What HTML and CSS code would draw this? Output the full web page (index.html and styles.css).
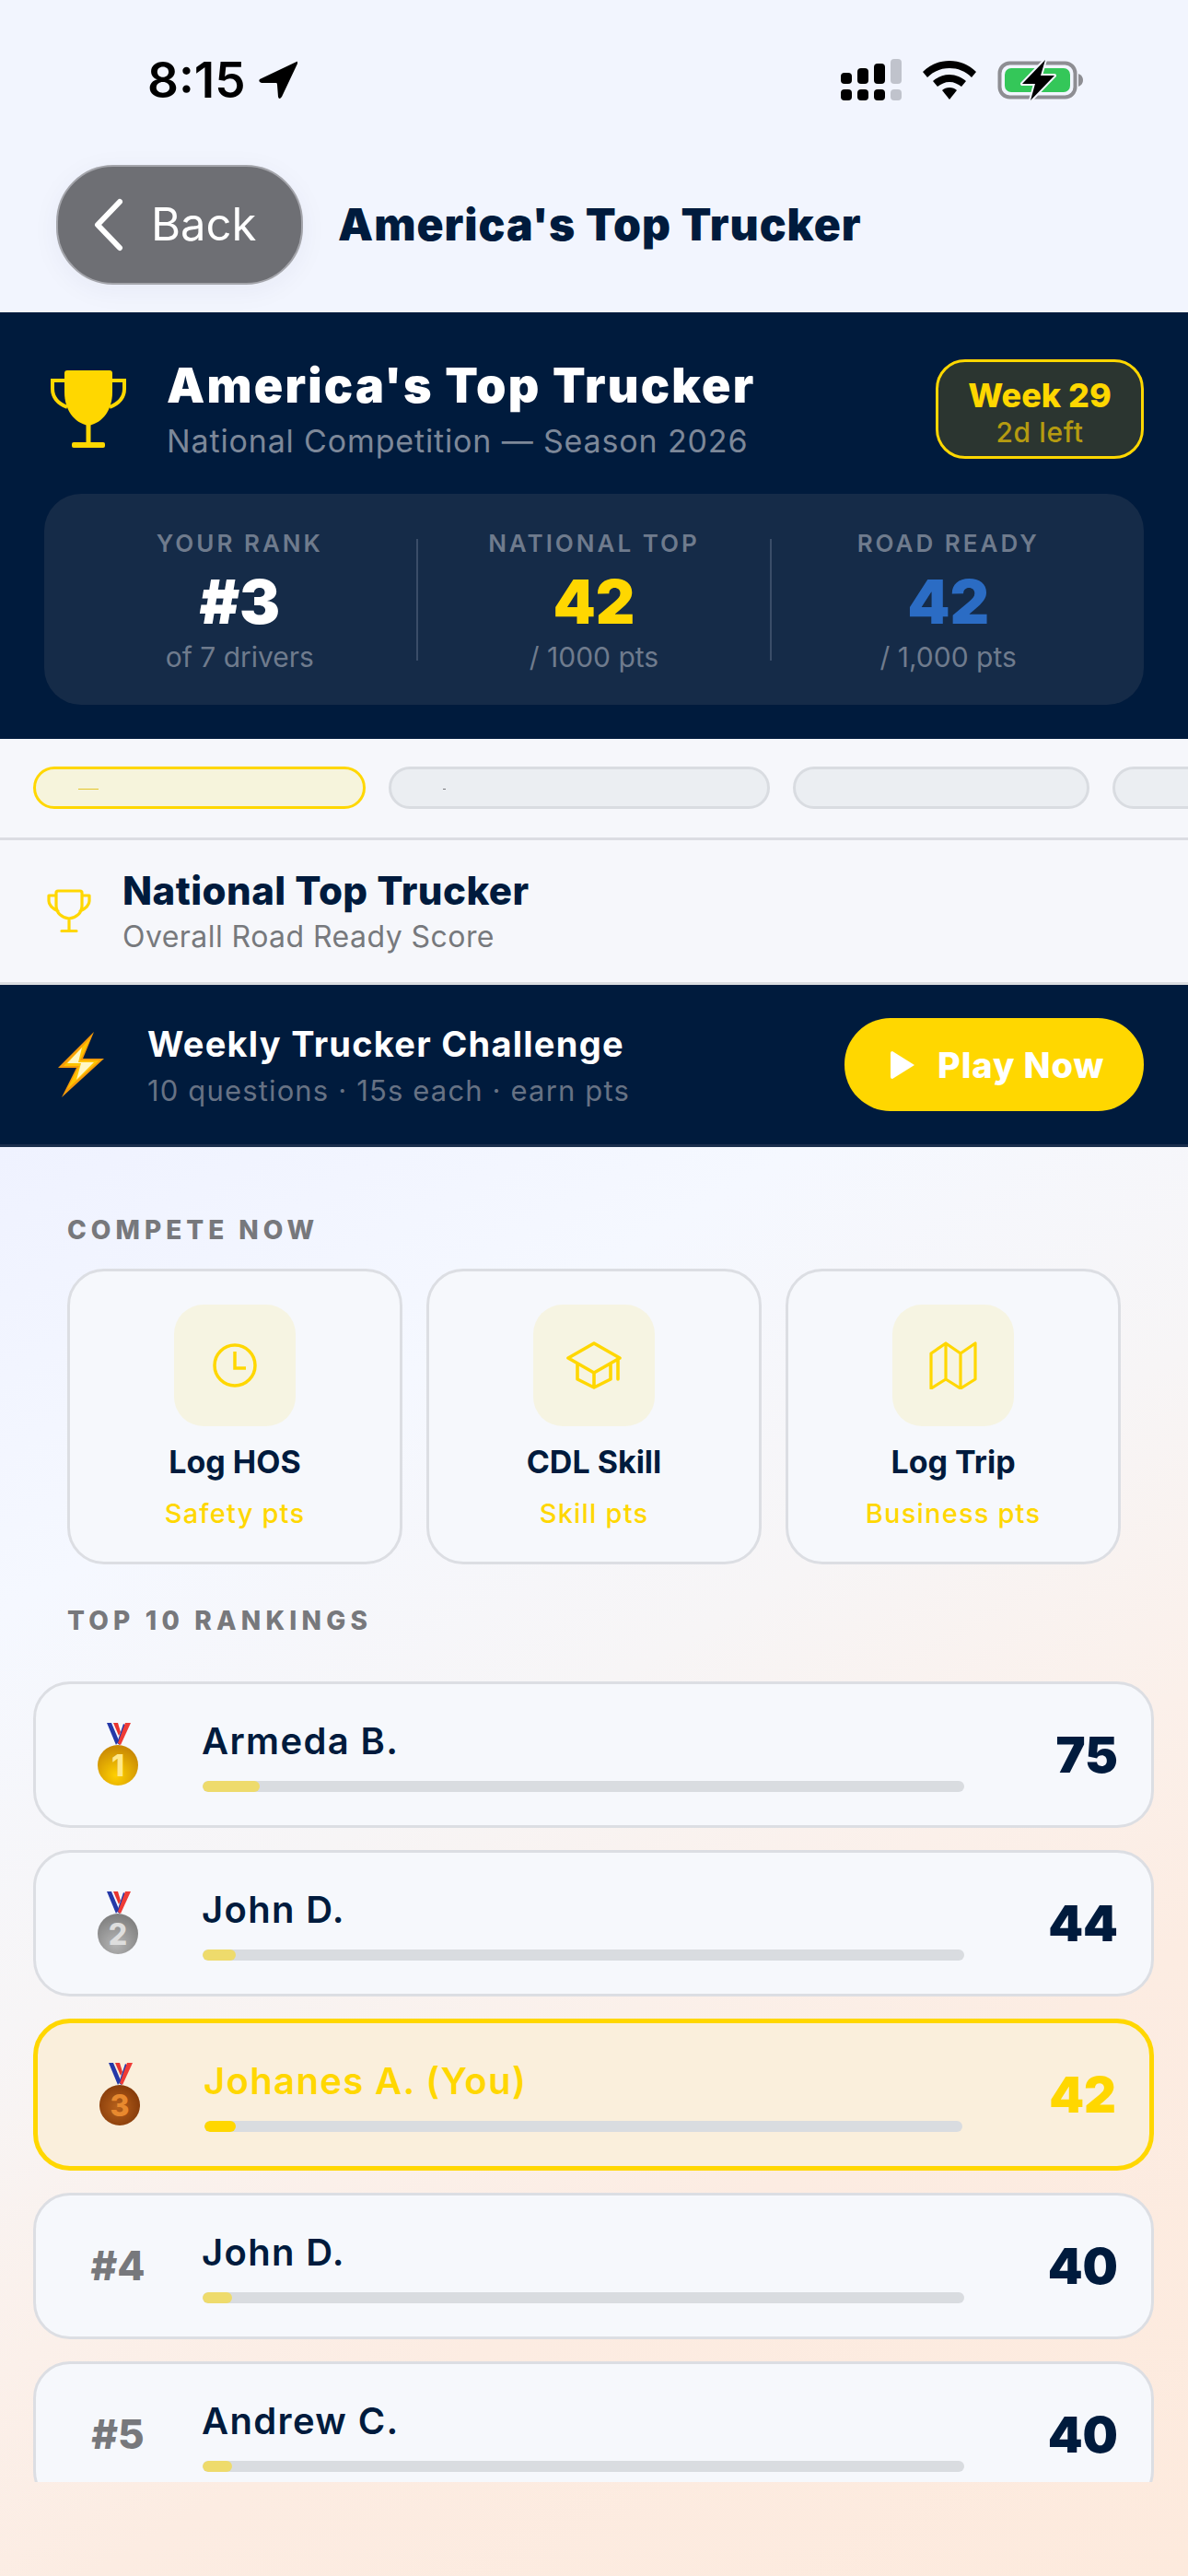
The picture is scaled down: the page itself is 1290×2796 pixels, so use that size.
FILE: index.html
```html
<!DOCTYPE html>
<html lang="en">
<head>
    <meta charset="UTF-8">
    <meta name="viewport" content="width=device-width, initial-scale=1.0">
    <title>America's Top Trucker</title>
    <link rel="stylesheet" href="styles.css">
</head>
<body>
    <div class="screen">
        <div class="status-bar">
            <div class="status-time">
                <span>8:15</span>
                <svg class="location-arrow" viewBox="0 0 42 42"><path d="M41 1 L1 20 Q-1 23 3 24 L19 24 Q20 24 20 26 L21 39 Q22 43 25 39 L42 3 Q43 0 41 1 Z" fill="#000"/></svg>
            </div>
            <div class="status-icons">
                <svg class="signal" viewBox="0 0 66 46">
                    <rect x="0" y="15" width="12" height="12" rx="4" fill="#000"/>
                    <rect x="18" y="10" width="12" height="17" rx="4" fill="#000"/>
                    <rect x="36" y="5" width="12" height="22" rx="4" fill="#000"/>
                    <rect x="54" y="0" width="12" height="27" rx="4" fill="#c0c3cc"/>
                    <rect x="0" y="33" width="12" height="12" rx="4" fill="#000"/>
                    <rect x="18" y="33" width="12" height="12" rx="4" fill="#000"/>
                    <rect x="36" y="33" width="12" height="12" rx="4" fill="#000"/>
                    <rect x="54" y="33" width="12" height="12" rx="4" fill="#c0c3cc"/>
                </svg>
                <svg class="wifi" viewBox="0 0 58 42">
                    <path d="M29 0 C40 0 50 4 58 12 L53 18 C46 11 38 8 29 8 C20 8 12 11 5 18 L0 12 C8 4 18 0 29 0 Z" fill="#000"/>
                    <path d="M29 15 C36 15 42 18 47 22 L42 28 C38 25 34 23 29 23 C24 23 20 25 16 28 L11 22 C16 18 22 15 29 15 Z" fill="#000"/>
                    <path d="M29 29 C32 29 35 30 37 32 L29 42 L21 32 C23 30 26 29 29 29 Z" fill="#000"/>
                </svg>
                <svg class="battery" viewBox="0 0 94 46">
                    <rect x="2.5" y="4.5" width="82" height="37" rx="11" fill="none" stroke="#8e8e93" stroke-width="4"/>
                    <rect x="8" y="10" width="71" height="26" rx="7" fill="#34c759"/>
                    <path d="M88 16 Q93 18 93 23 Q93 28 88 30 Z" fill="#8e8e93"/>
                    <path d="M52 1 L27 27 H41 L36 45 L62 18 H47 Z" fill="#000" stroke="#f2f5fe" stroke-width="4" paint-order="stroke" stroke-linejoin="round"/>
                </svg>
            </div>
        </div>

        <div class="nav-bar">
            <div class="back-button">
                <svg class="back-chevron" viewBox="0 0 34 58"><path d="M29 4 L5 29 L29 54" fill="none" stroke="#fff" stroke-width="6" stroke-linecap="round" stroke-linejoin="round"/></svg>
                <span>Back</span>
            </div>
            <div class="nav-title">America's Top Trucker</div>
        </div>

        <div class="hero">
            <div class="hero-top">
                <svg class="hero-trophy" viewBox="0 0 84 84">
                    <path d="M16 3 Q16 0 19 0 H65 Q68 0 68 3 V24 C68 42 58 57 42 60 C26 57 16 42 16 24 Z" fill="#ffd700"/>
                    <path d="M16 11 H3 V20 C3 30 9 36 19 40 M68 11 H81 V20 C81 30 75 36 65 40" fill="none" stroke="#ffd700" stroke-width="4"/>
                    <rect x="39.5" y="58" width="5" height="22" fill="#ffd700"/>
                    <rect x="24" y="78" width="36" height="6" rx="2" fill="#ffd700"/>
                </svg>
                <div class="hero-text">
                    <div class="hero-title">America's Top Trucker</div>
                    <div class="hero-sub">National Competition — Season 2026</div>
                </div>
                <div class="week-badge">
                    <div class="week-num">Week 29</div>
                    <div class="week-left">2d left</div>
                </div>
            </div>
            <div class="stats-card">
                <div class="stat">
                    <div class="stat-label">YOUR RANK</div>
                    <div class="stat-value">#3</div>
                    <div class="stat-sub">of 7 drivers</div>
                </div>
                <div class="stat-divider"></div>
                <div class="stat">
                    <div class="stat-label">NATIONAL TOP</div>
                    <div class="stat-value gold">42</div>
                    <div class="stat-sub">/ 1000 pts</div>
                </div>
                <div class="stat-divider"></div>
                <div class="stat">
                    <div class="stat-label">ROAD READY</div>
                    <div class="stat-value blue">42</div>
                    <div class="stat-sub">/ 1,000 pts</div>
                </div>
            </div>
        </div>

        <div class="tabs">
            <div class="tab tab-active"><span class="tab-dash"></span></div>
            <div class="tab tab-second"><span class="tab-dot"></span></div>
            <div class="tab tab-third"></div>
            <div class="tab tab-fourth"></div>
        </div>

        <div class="board-title">
            <svg class="board-trophy" viewBox="0 0 48 48">
                <path d="M10 4 Q10 2 12 2 H36 Q38 2 38 4 V18 C38 26 32 31 24 32 C16 31 10 26 10 18 Z M10 7 H2 V13 C2 18 6 21 12 24 M38 7 H46 V13 C46 18 42 21 36 24 M24 32 V45 M16 45.5 H32" fill="none" stroke="#ffd700" stroke-width="3.2" stroke-linecap="round" stroke-linejoin="round"/>
            </svg>
            <div>
                <div class="board-name">National Top Trucker</div>
                <div class="board-sub">Overall Road Ready Score</div>
            </div>
        </div>

        <div class="challenge">
            <svg class="bolt" viewBox="0 0 50 72">
                <path d="M39 0 L0 39 H20 L4 71 L50 29 H27 Z" fill="#f59a0a"/>
                <path d="M35 7 L6 37 H23 L10 62 L45 31 H24 Z" fill="#ffc400"/>
                <path d="M26 17 L10 34 H25 L20 52 L39 33 H22 Z" fill="#fff7c4"/>
            </svg>
            <div class="challenge-text">
                <div class="challenge-title">Weekly Trucker Challenge</div>
                <div class="challenge-sub">10 questions · 15s each · earn pts</div>
            </div>
            <div class="play-button">
                <svg class="play-icon" viewBox="0 0 26 30"><path d="M2 0 L26 15 L2 30 Q0 30 0 28 V2 Q0 0 2 0 Z" fill="#fff"/></svg>
                <span>Play Now</span>
            </div>
        </div>

        <div class="main">
            <div class="section-label compete-label">COMPETE NOW</div>
            <div class="compete-grid">
                <div class="compete-card">
                    <div class="compete-icon">
                        <svg class="icon-clock" viewBox="0 0 48 48">
                            <circle cx="24" cy="24" r="22" fill="none" stroke="#ffd700" stroke-width="3.5"/>
                            <path d="M24 9 V27 H36" fill="none" stroke="#ffd700" stroke-width="3.5"/>
                        </svg>
                    </div>
                    <div class="compete-name">Log HOS</div>
                    <div class="compete-pts">Safety pts</div>
                </div>
                <div class="compete-card">
                    <div class="compete-icon">
                        <svg class="icon-cap" viewBox="0 0 60 52">
                            <path d="M30 2 L58 18 L30 34 L2 18 Z M12 25 V41 L30 50 L48 41 V25 M30 34 V50 M56 18 V41" fill="none" stroke="#ffd700" stroke-width="3.6" stroke-linecap="round" stroke-linejoin="round"/>
                        </svg>
                    </div>
                    <div class="compete-name">CDL Skill</div>
                    <div class="compete-pts">Skill pts</div>
                </div>
                <div class="compete-card">
                    <div class="compete-icon">
                        <svg class="icon-map" viewBox="0 0 52 52">
                            <path d="M2 13 L18 2 L34 13 L50 2 V41 L34 51 L18 41 L2 51 Z M18 2 V41 M34 13 V51" fill="none" stroke="#ffd700" stroke-width="3.2" stroke-linejoin="round"/>
                        </svg>
                    </div>
                    <div class="compete-name">Log Trip</div>
                    <div class="compete-pts">Business pts</div>
                </div>
            </div>

            <div class="section-label rankings-label">TOP 10 RANKINGS</div>
            <div class="rank-list">
                <div class="rank-row">
                    <div class="rank-col">
                        <svg class="medal" viewBox="0 0 44 68">
                            <defs><radialGradient id="gold-fill" cx="0.45" cy="0.75" r="0.7"><stop offset="0" stop-color="#ffd000"/><stop offset="1" stop-color="#c98a05"/></radialGradient></defs>
                            <path d="M17 0 H22 L25 10 L23 14 Z" fill="#e8352f"/>
                            <path d="M10 0 H15 L23 19 L20 24 Z" fill="#2438a8"/>
                            <path d="M28 1 L21 22 L24 24 L31 3 Z" fill="#2438a8"/>
                            <path d="M30 0 H36 L25 24 L22 22 Z" fill="#ee3b36"/>
                            <circle cx="22" cy="46" r="22" fill="url(#gold-fill)"/>
                            <text class="medal-digit" x="22" y="58" fill="#ffe88a">1</text>
                        </svg>
                    </div>
                    <div class="rank-info">
                        <div class="rank-name">Armeda B.</div>
                        <div class="rank-track"><div class="rank-fill" style="width: 62px"></div></div>
                    </div>
                    <div class="rank-score">75</div>
                </div>
                <div class="rank-row">
                    <div class="rank-col">
                        <svg class="medal" viewBox="0 0 44 68">
                            <defs><radialGradient id="silver-fill" cx="0.45" cy="0.75" r="0.7"><stop offset="0" stop-color="#b5b5b5"/><stop offset="1" stop-color="#808080"/></radialGradient></defs>
                            <path d="M17 0 H22 L25 10 L23 14 Z" fill="#e8352f"/>
                            <path d="M10 0 H15 L23 19 L20 24 Z" fill="#2438a8"/>
                            <path d="M28 1 L21 22 L24 24 L31 3 Z" fill="#2438a8"/>
                            <path d="M30 0 H36 L25 24 L22 22 Z" fill="#ee3b36"/>
                            <circle cx="22" cy="46" r="22" fill="url(#silver-fill)"/>
                            <text class="medal-digit" x="22" y="58" fill="#dedede">2</text>
                        </svg>
                    </div>
                    <div class="rank-info">
                        <div class="rank-name">John D.</div>
                        <div class="rank-track"><div class="rank-fill" style="width: 36px"></div></div>
                    </div>
                    <div class="rank-score">44</div>
                </div>
                <div class="rank-row rank-you">
                    <div class="rank-col">
                        <svg class="medal" viewBox="0 0 44 68">
                            <defs><radialGradient id="bronze-fill" cx="0.45" cy="0.55" r="0.7"><stop offset="0" stop-color="#b8621c"/><stop offset="1" stop-color="#7a3206"/></radialGradient></defs>
                            <path d="M17 0 H22 L25 10 L23 14 Z" fill="#e8352f"/>
                            <path d="M10 0 H15 L23 19 L20 24 Z" fill="#2438a8"/>
                            <path d="M28 1 L21 22 L24 24 L31 3 Z" fill="#2438a8"/>
                            <path d="M30 0 H36 L25 24 L22 22 Z" fill="#ee3b36"/>
                            <circle cx="22" cy="46" r="22" fill="url(#bronze-fill)"/>
                            <text class="medal-digit" x="22" y="58" fill="#e8892e">3</text>
                        </svg>
                    </div>
                    <div class="rank-info">
                        <div class="rank-name">Johanes A. (You)</div>
                        <div class="rank-track"><div class="rank-fill" style="width: 34px"></div></div>
                    </div>
                    <div class="rank-score">42</div>
                </div>
                <div class="rank-row">
                    <div class="rank-col"><span class="rank-num">#4</span></div>
                    <div class="rank-info">
                        <div class="rank-name">John D.</div>
                        <div class="rank-track"><div class="rank-fill" style="width: 32px"></div></div>
                    </div>
                    <div class="rank-score">40</div>
                </div>
                <div class="rank-row">
                    <div class="rank-col"><span class="rank-num">#5</span></div>
                    <div class="rank-info">
                        <div class="rank-name">Andrew C.</div>
                        <div class="rank-track"><div class="rank-fill" style="width: 32px"></div></div>
                    </div>
                    <div class="rank-score">40</div>
                </div>
            </div>
        </div>
    </div>
</body>
</html>
```

FILE: styles.css
```css
body {
    margin: 0;
    font-family: Inter, "Liberation Sans", sans-serif;
    color: #001b3d;
}
.screen {
    width: 1290px;
    height: 2796px;
    display: flex;
    flex-direction: column;
    overflow: hidden;
    background-color: #f2f5fe;
}
.status-bar {
    height: 150px;
    padding: 24px 113px 0 160px;
    display: flex;
    justify-content: space-between;
    align-items: center;
    box-sizing: border-box;
    flex-shrink: 0;
}
.status-time {
    display: flex;
    align-items: center;
    gap: 14px;
    font-size: 53px;
    font-weight: 600;
    color: #000;
}
.location-arrow {
    width: 42px;
    height: 42px;
}
.status-icons {
    display: flex;
    align-items: center;
    gap: 23px;
}
.signal {
    width: 66px;
    height: 46px;
}
.wifi {
    width: 58px;
    height: 42px;
}
.battery {
    width: 94px;
    height: 46px;
}
.nav-bar {
    height: 189px;
    padding: 0 0 0 61px;
    display: flex;
    align-items: center;
    gap: 38px;
    box-sizing: border-box;
    flex-shrink: 0;
}
.back-button {
    width: 268px;
    height: 130px;
    margin-top: -2px;
    display: flex;
    align-items: center;
    gap: 29px;
    padding-left: 38px;
    box-sizing: border-box;
    background-color: #6e6f74;
    border: 2px solid #a4a5ab;
    border-radius: 62px;
    box-shadow: 0 6px 30px rgba(30, 40, 90, 0.05);
    color: #fff;
    font-size: 49px;
}
.back-chevron {
    width: 34px;
    height: 58px;
}
.nav-title {
    margin-top: -2px;
    font-size: 48px;
    font-weight: 900;
    letter-spacing: 1px;
}
.hero {
    height: 463px;
    padding: 48px 48px 0;
    box-sizing: border-box;
    background-color: #001b3d;
    flex-shrink: 0;
}
.hero-top {
    display: flex;
    align-items: center;
    height: 108px;
    margin-top: 3px;
}
.hero-trophy {
    width: 84px;
    height: 84px;
    margin-left: 6px;
    margin-right: 43px;
}
.hero-text {
    flex: 1;
}
.hero-title {
    font-size: 52px;
    font-weight: 900;
    letter-spacing: 2.2px;
    color: #fff;
    line-height: 62px;
}
.hero-sub {
    font-size: 34px;
    letter-spacing: 0.85px;
    color: #7d8899;
    line-height: 44px;
    margin-top: 7px;
}
.week-badge {
    width: 226px;
    height: 108px;
    box-sizing: border-box;
    border: 3px solid #ffd700;
    border-radius: 32px;
    background-color: #2b3530;
    text-align: center;
    padding-top: 14px;
}
.week-num {
    font-size: 36px;
    font-weight: 800;
    color: #ffd700;
    line-height: 44px;
}
.week-left {
    font-size: 30px;
    font-weight: 500;
    letter-spacing: 0.6px;
    color: #b59b10;
    line-height: 36px;
}
.stats-card {
    margin-top: 38px;
    height: 229px;
    padding: 0 21px;
    display: flex;
    align-items: center;
    background-color: #152b48;
    border-radius: 40px;
}
.stat {
    flex: 1;
    text-align: center;
}
.stat-label {
    font-size: 26px;
    font-weight: 600;
    letter-spacing: 3px;
    color: #6f7b8d;
    line-height: 34px;
    margin-top: 4px;
}
.stat-value {
    font-size: 66px;
    font-weight: 900;
    color: #fff;
    line-height: 80px;
    margin-top: 6px;
}
.stat-value.gold {
    color: #ffd700;
}
.stat-value.blue {
    color: #2b6cc4;
}
.stat-sub {
    font-size: 30px;
    color: #6f7b8d;
    line-height: 40px;
}
.stat-divider {
    width: 2px;
    height: 132px;
    background-color: #3a4d68;
}
.tabs {
    height: 110px;
    box-sizing: border-box;
    padding: 30px 0 0 36px;
    display: flex;
    gap: 25px;
    background-color: #f6f7fb;
    border-bottom: 3px solid #dcdde2;
    overflow: hidden;
    flex-shrink: 0;
}
.tab {
    height: 46px;
    box-sizing: border-box;
    flex-shrink: 0;
    border: 3px solid #d9dce1;
    border-radius: 23px;
    background-color: #ebeef2;
    display: flex;
    align-items: center;
}
.tab-active {
    width: 361px;
    border-color: #ffd700;
    background-color: #f6f4dc;
}
.tab-second {
    width: 414px;
}
.tab-third {
    width: 322px;
}
.tab-fourth {
    width: 120px;
}
.tab-dash {
    width: 22px;
    height: 1px;
    margin: 3px 0 0 46px;
    background-color: #e3c52a;
}
.tab-dot {
    width: 3px;
    height: 1px;
    margin: 3px 0 0 56px;
    background-color: #77787c;
}
.board-title {
    height: 157px;
    box-sizing: border-box;
    padding-left: 51px;
    display: flex;
    align-items: center;
    gap: 34px;
    background-color: #f6f7fb;
    border-bottom: 3px solid #dcdee1;
    flex-shrink: 0;
}
.board-trophy {
    width: 48px;
    height: 48px;
}
.board-name {
    font-size: 42px;
    font-weight: 800;
    letter-spacing: 0.45px;
    line-height: 54px;
}
.board-sub {
    font-size: 32px;
    letter-spacing: 0.45px;
    color: #77797d;
    line-height: 42px;
    margin-top: 2px;
}
.challenge {
    height: 176px;
    box-sizing: border-box;
    padding: 0 48px 0 63px;
    display: flex;
    align-items: center;
    background-color: #001b3d;
    border-bottom: 3px solid #1a2e4d;
    flex-shrink: 0;
}
.bolt {
    width: 50px;
    height: 72px;
    margin-right: 47px;
}
.challenge-text {
    flex: 1;
}
.challenge-title {
    font-size: 38px;
    font-weight: 700;
    letter-spacing: 1.25px;
    color: #fff;
    line-height: 48px;
    margin-top: 2px;
}
.challenge-sub {
    font-size: 31px;
    letter-spacing: 1.15px;
    color: #677284;
    line-height: 42px;
    margin-top: 6px;
}
.play-button {
    width: 325px;
    height: 101px;
    box-sizing: border-box;
    padding-left: 50px;
    display: flex;
    align-items: center;
    gap: 25px;
    background-color: #ffd700;
    border-radius: 50px;
    color: #fff;
    font-size: 38px;
    font-weight: 800;
    letter-spacing: 0.9px;
}
.play-icon {
    width: 26px;
    height: 30px;
}
.main {
    flex: 1;
    min-height: 0;
    display: flex;
    flex-direction: column;
    padding: 0 37px 102px 36px;
    background: linear-gradient(150deg, #eff2ff 0%, #f5f8ff 22%, #f7f5f6 42%, #fbf0ea 58%, #fcece2 70%, #fdeadd 100%);
}
.section-label {
    font-size: 28px;
    font-weight: 800;
    color: #77787c;
    line-height: 34px;
    margin-left: 37px;
}
.compete-label {
    margin-top: 73px;
    letter-spacing: 5px;
}
.compete-grid {
    display: flex;
    gap: 26px;
    margin: 25px 0 0 37px;
}
.compete-card {
    width: 364px;
    height: 321px;
    box-sizing: border-box;
    padding-top: 36px;
    border: 3px solid #dcdee3;
    border-radius: 40px;
    background-color: #f6f8fc;
    text-align: center;
}
.compete-icon {
    width: 132px;
    height: 132px;
    margin: 0 auto;
    display: flex;
    justify-content: center;
    align-items: center;
    background-color: #f6f4e2;
    border-radius: 32px;
}
.icon-clock {
    width: 48px;
    height: 48px;
}
.icon-cap {
    width: 60px;
    height: 52px;
}
.icon-map {
    width: 52px;
    height: 52px;
}
.compete-name {
    font-size: 34px;
    font-weight: 700;
    line-height: 44px;
    margin-top: 17px;
}
.compete-pts {
    font-size: 29px;
    font-weight: 500;
    letter-spacing: 1.2px;
    color: #ffd700;
    line-height: 38px;
    margin-top: 15px;
}
.rankings-label {
    margin-top: 44px;
    letter-spacing: 5.2px;
}
.rank-list {
    flex: 1;
    min-height: 0;
    overflow: hidden;
    display: flex;
    flex-direction: column;
    gap: 24.5px;
    margin-top: 49px;
}
.rank-row {
    flex-shrink: 0;
    display: flex;
    align-items: center;
    padding: 35.25px 36px 35.25px 24px;
    border: 3px solid #dcdee3;
    border-radius: 40px;
    background-color: #f6f8fc;
}
.rank-you {
    padding-top: 36.25px;
    padding-bottom: 36.25px;
    border: 5px solid #ffd700;
    background-color: #faefdc;
}
.rank-col {
    width: 130px;
    display: flex;
    justify-content: center;
    margin-right: 27px;
    flex-shrink: 0;
}
.medal {
    width: 44px;
    height: 68px;
}
.medal-digit {
    font-size: 32px;
    font-weight: 800;
    text-anchor: middle;
}
.rank-num {
    font-size: 44px;
    font-weight: 800;
    color: #77787c;
}
.rank-info {
    flex: 1;
    min-width: 0;
}
.rank-name {
    font-size: 40px;
    font-weight: 600;
    letter-spacing: 1.35px;
    line-height: 54px;
    margin-bottom: 16px;
    margin-left: -1px;
}
.rank-you .rank-name,
.rank-you .rank-score {
    color: #ffd700;
}
.rank-track {
    height: 12px;
    border-radius: 6px;
    background-color: #d9dce0;
    overflow: hidden;
}
.rank-fill {
    height: 100%;
    border-radius: 6px;
    background-color: #eedb6c;
}
.rank-you .rank-fill {
    background-color: #ffd700;
}
.rank-score {
    width: 140px;
    margin-left: 27px;
    flex-shrink: 0;
    text-align: right;
    font-size: 54px;
    font-weight: 900;
}
```
